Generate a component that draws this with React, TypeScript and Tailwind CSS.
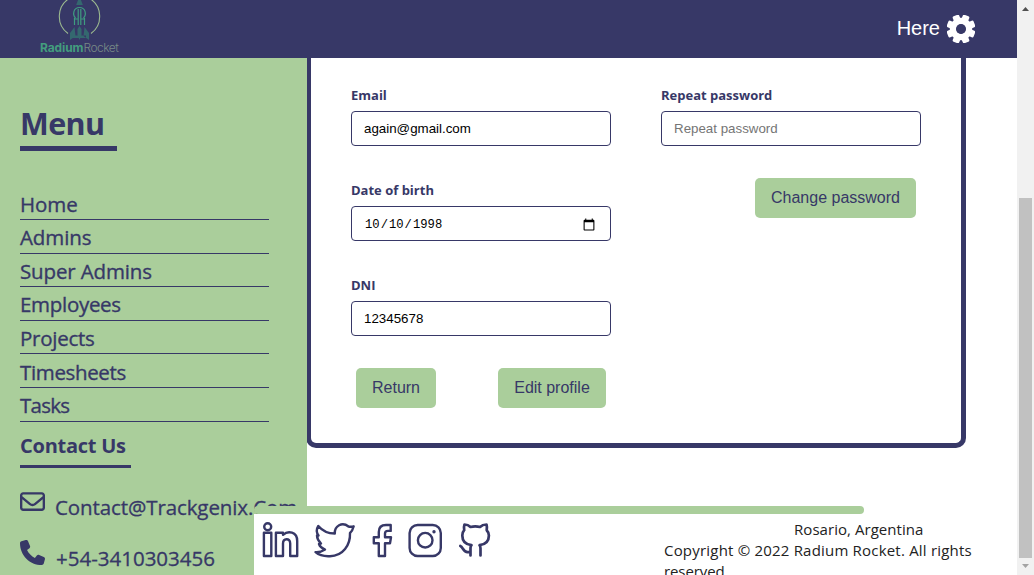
import React from 'react';
import { FaPhone, FaRegEnvelope } from 'react-icons/fa6';

const UI = "font-['Open_Sans',sans-serif]";
const ARIAL = "font-['Liberation_Sans',sans-serif]";

function Logo() {
  return (
    <div className="ml-[40px] flex w-[80px] flex-col items-center">
      <svg width="80" height="42" viewBox="40 0 80 42" fill="none">
        <path d="M68 33.5A21.2 21.2 0 0 1 70 -2M91 33.5A21.2 21.2 0 0 0 89 -2" stroke="#9bb98f" strokeWidth="1.100" />
        <path d="M79.500 -4L82.800 5H76.200Z" fill="#34686f" />
        <path d="M74.500 25V18M78.200 25V9M80.800 25V9M84.500 25V18M74.500 19H77.500M81.500 19H84.500M75.500 18C72.500 15 73 7.500 79.500 7.500S86.500 15 83.500 18" stroke="#3f9c80" strokeWidth="1.200" />
        <path d="M74.500 27L75.500 36L70 40V33Z M84.500 27L83.500 36L89 40V33Z M79.500 26L81.500 29V35L79.500 40L77.500 35V29Z M73 35.500H86V38H73Z" fill="#34686f" />
      </svg>
      <div className="flex w-[80px] font-['Inter',sans-serif] text-[12px] leading-[12px] whitespace-nowrap">
        <span className="tracking-[-0.1px] font-bold text-[#439d7e]">Radium</span>
        <span className="tracking-[-0.5px] font-light text-[#788a86]">Rocket</span>
      </div>
    </div>
  );
}

function Gear() {
  return (
    <svg width="28" height="28" viewBox="-14 -14 28 28">
      <g fill="#fff">
        {[22.5, 67.5, 112.5, 157.5, 202.5, 247.5, 292.5, 337.5].map((angle) => (
          <rect key={angle} x="-3.500" y="-14.500" width="7" height="10" rx="1.500" transform={`rotate(${angle})`} />
        ))}
      </g>
      <circle r="8.200" fill="none" stroke="#fff" strokeWidth="6" />
      <circle r="5" fill="#373867" />
    </svg>
  );
}

const nav = [
  { name: 'Home', spacing: 'tracking-[-0.1px]' },
  { name: 'Admins', spacing: 'tracking-[-0.1px]' },
  { name: 'Super Admins', spacing: 'tracking-[-0.15px]' },
  { name: 'Employees', spacing: 'tracking-[-0.3px]' },
  { name: 'Projects', spacing: 'tracking-[-0.25px]' },
  { name: 'Timesheets', spacing: 'tracking-[-0.35px]' },
  { name: 'Tasks', spacing: 'tracking-[-0.75px]' },
];

function Sidebar() {
  return (
    <aside className={`${UI} z-10 h-full w-[307px] shrink-0 bg-[#aace9b] pl-[20px] text-[#373867]`}>
      <h1 className="mt-[46px] h-[47px] w-[97px] border-b-[5px] border-[#373867] text-[30.500px] leading-[39px] font-bold tracking-[-0.6px]">Menu</h1>
      <ul className="mt-[35.400px] w-[249px]">
        {nav.map(({ name, spacing }) => (
          <li key={name} className={`h-[33.600px] border-b border-[#373867] pt-[2.200px] text-[20.500px] leading-[30px] [-webkit-text-stroke:0.35px_#373867] ${spacing}`}>
            {name}
          </li>
        ))}
      </ul>
      <h2 className="mt-[8px] h-[38px] w-[111px] border-b-[3px] border-[#373867] text-[20px] leading-[31px] font-bold tracking-[-0.25px]">Contact Us</h2>
      <div className="mt-[21px] flex h-[36px] gap-[10px] text-[20.500px] leading-[36px]">
        <FaRegEnvelope className="mt-[0.600px]" size={25} />
        <span className="tracking-[-0.1px] [-webkit-text-stroke:0.3px_#373867]">Contact@Trackgenix.Com</span>
      </div>
      <div className="mt-[14px] flex h-[36px] gap-[11px] text-[20.500px] leading-[38px]">
        <FaPhone className="mt-[1.600px]" size={25} />
        <span className="[-webkit-text-stroke:0.3px_#373867]">+54-3410303456</span>
      </div>
    </aside>
  );
}

function Field({ label, type = 'text', value, placeholder }: { label: string; type?: string; value?: string; placeholder?: string }) {
  return (
    <label className="flex w-[260px] flex-col">
      <span className={`${UI} h-[25px] text-[13px] leading-[18px] font-bold text-[#373867]`}>{label}</span>
      <input
        type={type}
        defaultValue={value}
        placeholder={placeholder}
        className={
          type === 'date'
            ? "h-[35px] rounded-[4px] border border-[#373867] pt-[3px] pr-[12px] pl-[12px] font-['Liberation_Mono',monospace] text-[12.200px] text-black [&::-webkit-calendar-picker-indicator]:size-[14.500px]"
            : "h-[35px] rounded-[4px] border border-[#373867] px-[12px] font-['Liberation_Sans',sans-serif] text-[13.333px] text-black placeholder:text-[#757575]"
        }
      />
    </label>
  );
}

function Button({ children, className }: { children: React.ReactNode; className: string }) {
  return <button className={`${ARIAL} h-[40px] rounded-[5px] bg-[#aace9b] pb-px text-[16px] text-[#373867] ${className}`}>{children}</button>;
}

function ProfileCard() {
  return (
    <section className="-ml-px flex h-[390px] w-[660px] gap-[50px] rounded-b-[10px] border-x-[5px] border-b-[5px] border-[#373867] pt-[28px] pl-[40px]">
      <div className="flex flex-col gap-[35px]">
        <Field label="Email" value="again@gmail.com" />
        <Field label="Date of birth" type="date" value="1998-10-10" />
        <Field label="DNI" value="12345678" />
        <div className="-mt-[3px] flex justify-between px-[5px]">
          <Button className="w-[80px]">Return</Button>
          <Button className="w-[108px]">Edit profile</Button>
        </div>
      </div>
      <div className="flex flex-col gap-[32px]">
        <Field label="Repeat password" type="password" placeholder="Repeat password" />
        <Button className="mr-[5px] w-[161px] self-end">Change password</Button>
      </div>
    </section>
  );
}

function SocialIcons() {
  return (
    <svg className="mt-[6px]" width="232" height="40" viewBox="260 520 232 40" fill="none" stroke="#373867" strokeWidth="2.400" strokeLinejoin="round" strokeLinecap="round">
      <circle cx="267.700" cy="526.800" r="3.500" />
      <path d="M263.900 532.800H271.300V556H263.900Z" />
      <path d="M275.900 532.800H283V534.800C288 530.500 297.200 531.500 297.200 541V556H290.200V543.500C290.200 537.500 283 538 283 543.500V556H275.900Z" />
      <path d="M353.700 526.300C351.500 527 350.500 527 348.500 526.500C342 521.500 334.500 526 334.800 533.500C328 533.500 322.500 531 318.300 526C315.800 530 317 533.500 318.500 535.500L317 535.500C317 539 319 541.500 321 543.500L319 544C320 547 322.500 548.500 325 549.500C322 551.500 319 552.500 315.500 552.200C320 556 325 556.500 330 556.200C343 556 350.500 545 350 533C351.800 531.500 353 529 353.700 526.300Z" />
      <path d="M390.700 525H386C381 525 378.800 528 378.800 532V537.200H373.800V543.300H378.800V556H385V543.300H390L391 537.200H385V533.500C385 531.500 386.500 530.900 388 530.900H390.700Z" />
      <rect x="409.600" y="525" width="31.200" height="31" rx="8" />
      <circle cx="425.200" cy="540.200" r="7.300" />
      <circle cx="434" cy="531.700" r="1" fill="#373867" strokeWidth="1.400" />
      <path strokeWidth="2.700" d="M480.500 555.500V548.500C480.500 547 480.200 546 479.500 545.200C485.500 544.500 488.900 541 488.900 535.500C488.900 533.500 488 531.500 486.700 530.200C487 528 487 526 486.500 524.500C484 524.500 481.500 525.500 480 527C477 526.200 473.500 526.200 470.500 527C469 525.500 467 524.500 464.500 524.500C463.800 526.500 463.800 528.500 464.200 530.200C463 531.500 462.300 533.500 462.300 535.500C462.300 541 465.500 544.500 471.500 545.200C470.800 546 470.500 547 470.500 548V555.500M460.300 546C463 547 463.300 552 467.500 552.200H470.500" />
    </svg>
  );
}

function Footer() {
  return (
    <footer className="absolute top-[506px] left-[254px] h-[69px] w-[763px]">
      <div className="h-[8px] w-[610px] rounded-[4px] bg-[#aace9b]" />
      <div className="flex h-[61px] items-start bg-white">
        <div className="ml-[6px]">
          <SocialIcons />
        </div>
        <div className={`${UI} ml-[172px] pt-[5px] text-[15px] leading-[21px] whitespace-nowrap text-[#222]`}>
          <p className="pl-[130px] tracking-[0.05px]">Rosario, Argentina</p>
          <p className="tracking-[0.2px]">Copyright © 2022 Radium Rocket. All rights</p>
          <p className="tracking-[-0.1px]">reserved</p>
        </div>
      </div>
    </footer>
  );
}

function Scrollbar() {
  return (
    <div className="flex h-full w-[17px] shrink-0 flex-col items-center bg-[#f1f1f1]">
      <svg className="block" width="17" height="17">
        <path d="M5 11L8.500 7L12 11Z" fill="#505050" />
      </svg>
      <div className="mt-[181px] h-[360px] w-[13px] bg-[#c1c1c1]" />
      <svg className="block" width="17" height="17">
        <path d="M5 6L8.500 10L12 6Z" fill="#a3a3a3" />
      </svg>
    </div>
  );
}

export default function App() {
  return (
    <div className="relative flex h-[575px] w-[1034px] overflow-hidden bg-white">
      <div className="flex min-w-0 flex-1 flex-col">
        <header className="flex h-[58px] shrink-0 items-start justify-between bg-[#373867]">
          <Logo />
          <div className={`${ARIAL} mr-[42px] flex h-[58px] items-center gap-[7px] text-[20px] text-white`}>
            <span className="pb-[2px]">Here</span>
            <Gear />
          </div>
        </header>
        <main className="flex min-h-0 flex-1 items-start">
          <Sidebar />
          <ProfileCard />
        </main>
      </div>
      <div className="absolute z-20">
        <Footer />
      </div>
      <Scrollbar />
    </div>
  );
}
